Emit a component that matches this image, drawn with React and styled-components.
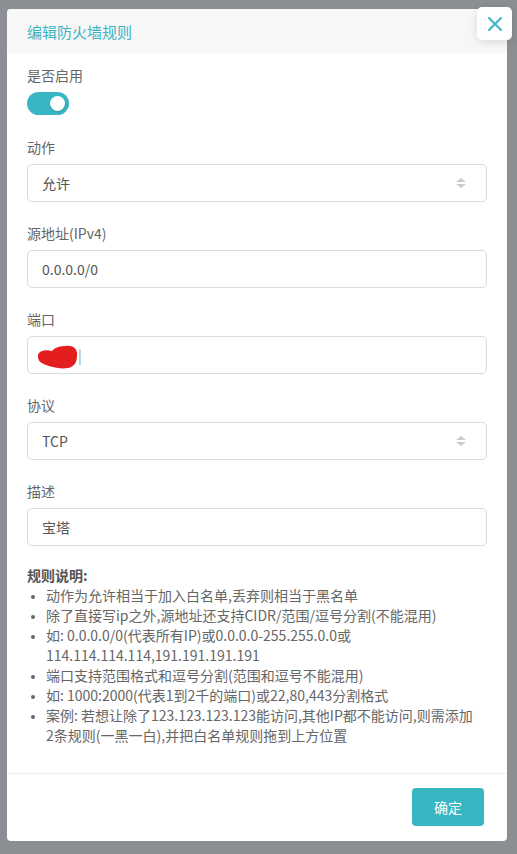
import styled, { createGlobalStyle } from "styled-components";

const GlobalStyle = createGlobalStyle`
  html, body {
    margin: 0;
    padding: 0;
    background: #8b8f93;
  }
  body {
    font-family: "Noto Sans CJK SC", "Noto Sans", "Liberation Sans", sans-serif;
    -webkit-font-smoothing: antialiased;
  }
`;

const teal = "#38b5c3";

const Backdrop = styled.div`
  width: 517px;
  height: 854px;
  box-sizing: border-box;
  padding: 9px 10px 0 7px;
  background: #8b8f93;
  overflow: hidden;
`;

const Dialog = styled.div`
  position: relative;
  width: 500px;
  background: #fff;
  border-radius: 4px;
  display: flex;
  flex-direction: column;
`;

const Header = styled.div`
  height: 44px;
  display: flex;
  align-items: center;
  padding-left: 20px;
  background: #f7f7f7;
  border-radius: 4px 4px 0 0;
`;

const Title = styled.div`
  font-size: 15px;
  color: ${teal};
`;

const CloseButton = styled.button`
  position: absolute;
  top: -2px;
  right: -5px;
  width: 35px;
  height: 33px;
  border: none;
  background: #fff;
  border-radius: 5px;
  box-shadow: 0 2px 8px rgba(0, 0, 0, 0.12);
  display: flex;
  align-items: center;
  justify-content: center;
  padding: 0;
`;

const Body = styled.div`
  padding: 12px 20px 28px;
  display: flex;
  flex-direction: column;
`;

const Group = styled.div`
  display: flex;
  flex-direction: column;
  margin-top: ${(p) => p.$top || 0}px;
`;

const Label = styled.div`
  font-size: 14px;
  line-height: 20px;
  color: #666;
  margin-bottom: 7px;
`;

const Toggle = styled.div`
  width: 42px;
  height: 23px;
  border-radius: 12px;
  background: ${teal};
  display: flex;
  align-items: center;
  justify-content: flex-end;
  padding-right: 4px;
  box-sizing: border-box;
`;

const Knob = styled.div`
  width: 15px;
  height: 15px;
  border-radius: 50%;
  background: #fff;
  box-shadow: 0 1px 2px rgba(0, 0, 0, 0.2);
`;

const Field = styled.div`
  height: 38px;
  box-sizing: border-box;
  border: 1px solid #d9d9e2;
  border-radius: 5px;
  display: flex;
  align-items: center;
  justify-content: space-between;
  padding: 0 20px 0 14px;
  font-size: 14px;
  color: #555;
  position: relative;
`;

const Arrows = styled.div`
  display: flex;
  flex-direction: column;
  gap: 2px;
  span {
    width: 0;
    height: 0;
    border-left: 5px solid transparent;
    border-right: 5px solid transparent;
  }
  span:first-child {
    border-bottom: 4px solid #c9c9d1;
  }
  span:last-child {
    border-top: 4px solid #c9c9d1;
  }
`;

const Caret = styled.span`
  margin-left: 36px;
  color: #999;
`;

const Scribble = styled.svg`
  position: absolute;
  left: 8px;
  top: 7px;
`;

const Rules = styled.div`
  margin-top: 19px;
  font-size: 14px;
  line-height: 20px;
  color: #666;
`;

const RulesTitle = styled.div`
  font-weight: bold;
  color: #555;
`;

const List = styled.ul`
  margin: 0;
  padding-left: 19px;
  li {
    line-height: 20px;
  }
  li::marker {
    font-size: 11px;
  }
`;

const NoWrap = styled.span`
  white-space: nowrap;
`;

const Footer = styled.div`
  border-top: 1px solid #eee;
  padding: 14px 23px 15px 0;
  display: flex;
  justify-content: flex-end;
`;

const Confirm = styled.button`
  width: 72px;
  height: 38px;
  border: none;
  border-radius: 4px;
  background: #38b6c2;
  color: #fff;
  font-size: 14px;
  font-family: inherit;
`;

const SelectField = ({ value }) => (
  <Field>
    <span>{value}</span>
    <Arrows>
      <span />
      <span />
    </Arrows>
  </Field>
);

const rules = [
  "动作为允许相当于加入白名单,丢弃则相当于黑名单",
  "除了直接写ip之外,源地址还支持CIDR/范围/逗号分割(不能混用)",
  "如: 0.0.0.0/0(代表所有IP)或0.0.0.0-255.255.0.0或114.114.114.114,191.191.191.191",
  "端口支持范围格式和逗号分割(范围和逗号不能混用)",
  "如: 1000:2000(代表1到2千的端口)或22,80,443分割格式",
  <>
    案例: 若想让除了123.123.123.123能访问,其他IP都不能访问,则需添加<NoWrap>2条</NoWrap>
    规则(一黑一白),并把白名单规则拖到上方位置
  </>,
];

export default function App() {
  return (
    <>
      <GlobalStyle />
      <Backdrop>
        <Dialog>
          <Header>
            <Title>编辑防火墙规则</Title>
          </Header>
          <CloseButton>
            <svg width="18" height="18" viewBox="0 0 18 18">
              <path d="M3 3 L15 15 M15 3 L3 15" stroke={teal} strokeWidth="2" strokeLinecap="round" />
            </svg>
          </CloseButton>
          <Body>
            <Group>
              <Label>是否启用</Label>
              <Toggle>
                <Knob />
              </Toggle>
            </Group>
            <Group $top={22}>
              <Label>动作</Label>
              <SelectField value="允许" />
            </Group>
            <Group $top={21}>
              <Label>源地址(IPv4)</Label>
              <Field>0.0.0.0/0</Field>
            </Group>
            <Group $top={21}>
              <Label>端口</Label>
              <Field>
                <Caret>|</Caret>
                <Scribble width="46" height="26" viewBox="0 0 46 26">
                  <path
                    d="M2 13 C1 8 8 5 16 7 C19 3 25 2 30 2 C38 1 42 6 41 12 C41 18 38 23 32 24 C26 25 20 24 13 22 C7 20 2 18 2 13 Z"
                    fill="#e41e1e"
                  />
                </Scribble>
              </Field>
            </Group>
            <Group $top={21}>
              <Label>协议</Label>
              <SelectField value="TCP" />
            </Group>
            <Group $top={21}>
              <Label>描述</Label>
              <Field>宝塔</Field>
            </Group>
            <Rules>
              <RulesTitle>规则说明:</RulesTitle>
              <List>
                {rules.map((r, i) => (
                  <li key={i}>{r}</li>
                ))}
              </List>
            </Rules>
          </Body>
          <Footer>
            <Confirm>确定</Confirm>
          </Footer>
        </Dialog>
      </Backdrop>
    </>
  );
}
